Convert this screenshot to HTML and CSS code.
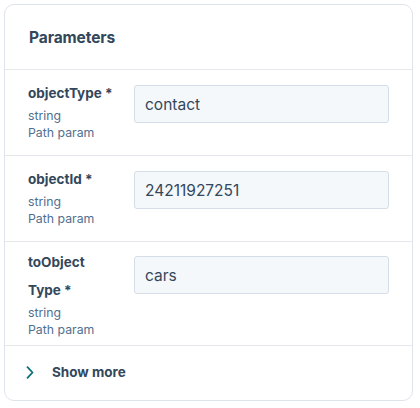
FILE: index.html
```html
<!DOCTYPE html>
<html lang="en">
<head>
<meta charset="utf-8">
<title>Parameters</title>
<link rel="stylesheet" href="styles.css">
</head>
<body>
<section class="card">
  <header class="card-header">
    <h2 class="card-title">Parameters</h2>
  </header>
  <div class="param">
    <div class="param-info">
      <div class="param-name">objectType *</div>
      <div class="param-meta">string</div>
      <div class="param-meta">Path param</div>
    </div>
    <div class="param-field"><div class="input">contact</div></div>
  </div>
  <div class="param">
    <div class="param-info">
      <div class="param-name">objectId *</div>
      <div class="param-meta">string</div>
      <div class="param-meta">Path param</div>
    </div>
    <div class="param-field"><div class="input">24211927251</div></div>
  </div>
  <div class="param param--wrapped">
    <div class="param-info">
      <div class="param-name">toObject<wbr>Type *</div>
      <div class="param-meta">string</div>
      <div class="param-meta">Path param</div>
    </div>
    <div class="param-field"><div class="input">cars</div></div>
  </div>
  <button class="show-more" type="button">
    <svg class="chevron" width="8" height="13" viewBox="0 0 8 13" aria-hidden="true">
      <path d="M1.5 1.2 L6.5 6.5 L1.5 11.8" fill="none" stroke="#0b6e7b" stroke-width="1.8" stroke-linecap="round" stroke-linejoin="round"/>
    </svg>
    <span>Show more</span>
  </button>
</section>
</body>
</html>
```

FILE: styles.css
```css
html, body {
  margin: 0;
  padding: 0;
  background: #ffffff;
}

body {
  padding: 4px 8px 0 4px;
  font-family: "Inter", "Lato", "Noto Sans", sans-serif;
  color: #33475b;
}

.card {
  box-sizing: border-box;
  width: 409px;
  height: 397px;
  border: 1px solid #dfe3eb;
  border-radius: 10px;
  background: #ffffff;
  overflow: hidden;
  display: flex;
  flex-direction: column;
}

.card-header {
  height: 64px;
  border-bottom: 1px solid #e5e8ed;
  display: flex;
  align-items: center;
  padding: 0 0 0 24px;
}

.card-title {
  margin: 0;
  font-size: 15.5px;
  font-weight: 700;
  color: #33475b;
  letter-spacing: -0.1px;
}

.param {
  display: flex;
  gap: 17px;
  padding: 9px 23px 14px 23px;
  border-bottom: 1px solid #e5e8ed;
}

.param--wrapped {
  padding-top: 6px;
  padding-bottom: 7px;
}

.param-info {
  width: 89px;
  flex: none;
}

.param-name {
  font-size: 13.5px;
  font-weight: 700;
  line-height: 28px;
  color: #33475b;
}

.param-meta {
  font-size: 12.3px;
  line-height: 17px;
  color: #516f90;
}

.param-field {
  flex: 1;
  padding-top: 6px;
}

.param--wrapped .param-field {
  padding-top: 8px;
}

.input {
  box-sizing: border-box;
  width: 255px;
  height: 38px;
  background: #f5f8fa;
  border: 1px solid #d5dde6;
  border-radius: 3px;
  padding: 0 10px;
  display: flex;
  align-items: center;
  font-size: 15.5px;
  color: #33475b;
}

.show-more {
  flex: 1;
  display: flex;
  align-items: center;
  gap: 18px;
  padding: 0 0 2px 21px;
  margin: 0;
  background: none;
  border: 0;
  font-family: inherit;
  font-size: 13.5px;
  font-weight: 700;
  color: #33475b;
  text-align: left;
  cursor: pointer;
}

.chevron {
  display: block;
  flex: none;
}
```
